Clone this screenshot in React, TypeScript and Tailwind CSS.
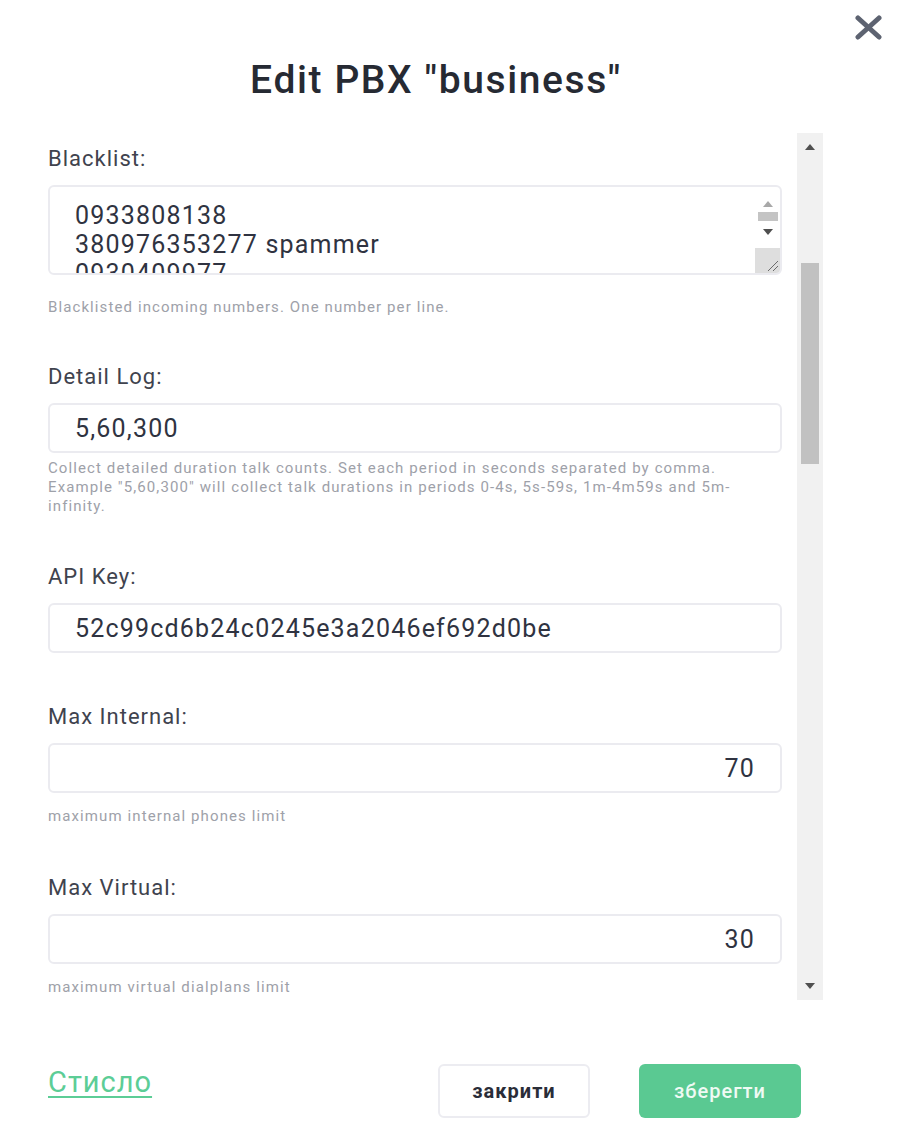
import React from 'react';

function Label({ text }: { text: string }) {
  return <div className="text-[22px] leading-[26px] tracking-[1px] text-[#3f434e]">{text}</div>;
}

function Help({ children, className = '' }: { children: React.ReactNode; className?: string }) {
  return <div className={`text-[15px] leading-[19px] tracking-[1.1px] text-[#9ea1a9] ${className}`}>{children}</div>;
}

function Field({ value, right = false }: { value: string; right?: boolean }) {
  return (
    <div
      className={`mt-[13px] h-[50px] w-[734px] rounded-[6px] border-2 border-[#ebebf0] bg-white px-[25px] text-[25px] leading-[48px] tracking-[1.2px] text-[#2f3341] ${right ? 'text-right' : ''}`}
    >
      {value}
    </div>
  );
}

function Arrow({ up, color }: { up?: boolean; color: string }) {
  return (
    <svg width="10" height="6" viewBox="0 0 10 6">
      <polygon points={up ? '0,6 10,6 5,0' : '0,0 10,0 5,6'} fill={color} />
    </svg>
  );
}

function Blacklist() {
  return (
    <div className="mt-[13px] flex h-[90px] w-[734px] overflow-hidden rounded-[6px] border-2 border-[#ebebf0] bg-white">
      <div className="flex-1 overflow-hidden pl-[25px] pt-[14px] text-[25px] leading-[29px] tracking-[1.2px] text-[#2f3341]">
        <div>0933808138</div>
        <div>380976353277 spammer</div>
        <div>0930409977</div>
      </div>
      <div className="flex w-[25px] flex-col items-center">
        <div className="mt-[14px]">
          <Arrow up color="#a8a8a8" />
        </div>
        <div className="mt-[5px] h-[9px] w-[20px] bg-[#c4c4c4]" />
        <div className="mt-[8px]">
          <Arrow color="#4f4f4f" />
        </div>
        <div className="mt-auto flex h-[25px] w-[25px] items-end justify-end bg-[#dedede]">
          <svg width="14" height="14" viewBox="0 0 14 14">
            <line x1="2" y1="12" x2="12" y2="2" stroke="#6a6a6a" strokeWidth="1" />
            <line x1="7" y1="12" x2="12" y2="7" stroke="#6a6a6a" strokeWidth="1" />
          </svg>
        </div>
      </div>
    </div>
  );
}

export default function App() {
  return (
    <div className="relative h-[1142px] w-[900px] overflow-hidden bg-white font-['Roboto',sans-serif]">
      <button className="absolute left-[855px] top-[15px]">
        <svg width="27" height="25" viewBox="0 0 27 25">
          <line x1="3" y1="3" x2="24" y2="22" stroke="#5d6371" strokeWidth="5" strokeLinecap="round" />
          <line x1="24" y1="3" x2="3" y2="22" stroke="#5d6371" strokeWidth="5" strokeLinecap="round" />
        </svg>
      </button>

      <div className="h-[133px] w-[872px] pt-[56px] text-center text-[39px] font-medium leading-[48px] tracking-[1.6px] text-[#262a33]">
        Edit PBX "business"
      </div>

      <div className="flex h-[867px]">
        <div className="w-[782px] overflow-hidden pl-[48px]">
          <div className="pt-[13px]">
            <Label text="Blacklist:" />
            <Blacklist />
            <Help className="mt-[23px]">Blacklisted incoming numbers. One number per line.</Help>
          </div>

          <div className="mt-[47px]">
            <Label text="Detail Log:" />
            <Field value="5,60,300" />
            <Help className="mt-[6px] w-[734px]">
              Collect detailed duration talk counts. Set each period in seconds separated by comma.
              <br />
              Example "5,60,300" will collect talk durations in periods 0-4s, 5s-59s, 1m-4m59s and 5m-
              <br />
              infinity.
            </Help>
          </div>

          <div className="mt-[48px]">
            <Label text="API Key:" />
            <Field value="52c99cd6b24c0245e3a2046ef692d0be" />
          </div>

          <div className="mt-[51px]">
            <Label text="Max Internal:" />
            <Field value="70" right />
            <Help className="mt-[14px]">maximum internal phones limit</Help>
          </div>

          <div className="mt-[49px]">
            <Label text="Max Virtual:" />
            <Field value="30" right />
            <Help className="mt-[14px]">maximum virtual dialplans limit</Help>
          </div>
        </div>

        <div className="ml-[15px] flex w-[26px] flex-col items-center bg-[#f1f1f1]">
          <div className="mt-[11px]">
            <Arrow up color="#505050" />
          </div>
          <div className="mt-[113px] h-[201px] w-[18px] bg-[#c1c1c1]" />
          <div className="mt-auto mb-[11px]">
            <Arrow color="#505050" />
          </div>
        </div>
      </div>

      <div className="flex items-start pl-[48px] pr-[99px] pt-[64px]">
        <a className="mt-px text-[29px] leading-[34px] tracking-[1px] text-[#5ccd96] underline decoration-[2px] underline-offset-[4px]">
          Стисло
        </a>
        <div className="ml-auto flex gap-[49px]">
          <button className="h-[54px] w-[152px] rounded-[6px] border-2 border-[#ececf1] bg-white text-[20px] font-bold tracking-[1px] text-[#2a2d38]">
            закрити
          </button>
          <button className="h-[54px] w-[162px] rounded-[6px] bg-[#5ac992] text-[20px] font-medium tracking-[1px] text-[#effaf4]">
            зберегти
          </button>
        </div>
      </div>
    </div>
  );
}
